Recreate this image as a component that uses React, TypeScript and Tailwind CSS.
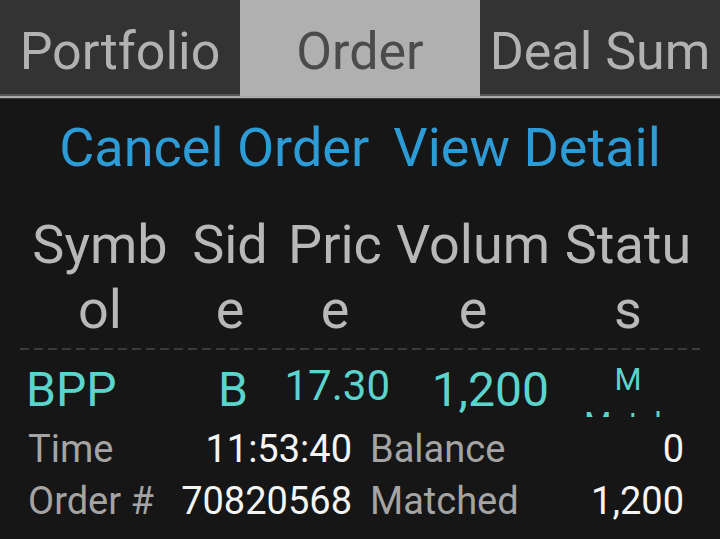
import React from 'react';

const TABS = ['Portfolio', 'Order', 'Deal Sum'];

const App: React.FC = () => {
  const active = 1;

  return (
    <div className="w-[720px] h-[539px] overflow-hidden bg-[#161616] [font-family:Roboto,sans-serif]">
      {/* Tab bar */}
      <div className="flex">
        {TABS.map((tab, i) => (
          <div
            key={tab}
            className={`flex-1 h-[96px] overflow-hidden whitespace-nowrap text-center text-[52px] leading-[61px] pt-[21px] ${
              i === active
                ? 'bg-[#b0b0b0] text-[#4b4b4b]'
                : 'bg-[#333333] text-[#b2b2b2] border-b-2 border-[#575757]'
            }`}
          >
            {tab}
          </div>
        ))}
      </div>
      <div className="h-[2px] bg-[#a9a9a9]" />
      <div className="h-px bg-[#3c3c3c]" />

      {/* Actions */}
      <div className="flex justify-center gap-[24px] pt-[17px] text-[54px] leading-[64px] text-[#2d9bd6]">
        <span>Cancel Order</span>
        <span>View Detail</span>
      </div>

      {/* Column headers */}
      <div className="flex pl-[20px] mt-[32px] text-[54px] leading-[65px] text-[#b8b8b8] text-center whitespace-nowrap">
        <div className="w-[160px]">Symb<br />ol</div>
        <div className="w-[100px]">Sid<br />e</div>
        <div className="w-[110px]">Pric<br />e</div>
        <div className="w-[166px]">Volum<br />e</div>
        <div className="w-[144px]">Statu<br />s</div>
      </div>

      <div className="mx-[20px] mt-[6px] h-[2px] bg-[repeating-linear-gradient(to_right,#3a3a3a_0_9px,transparent_9px_14px)]" />

      {/* Order row */}
      <div className="flex items-start h-[60px] pl-[20px] mt-[12px] text-[#5cd4ce] whitespace-nowrap">
        <div className="w-[160px] pl-[6px] text-[48px] leading-[56px]">BPP</div>
        <div className="w-[100px] pr-[32px] text-right text-[48px] leading-[56px]">B</div>
        <div className="w-[110px] text-right text-[42px] leading-[49px] -mt-[1px]">17.30</div>
        <div className="w-[166px] pr-[7px] text-right text-[48px] leading-[56px]">1,200</div>
        <div className="w-[144px] h-[59px] overflow-hidden text-center text-[31px] leading-[44px] -mt-[4px]">
          M<br />Match
        </div>
      </div>

      {/* Details */}
      <div className="px-[28px] mt-[1px] text-[38px] leading-[52px]">
        <div className="flex">
          <div className="w-[324px] flex justify-between">
            <span className="text-[#a4a4a4]">Time</span>
            <span className="text-[#f4f4f4]">11:53:40</span>
          </div>
          <div className="w-[314px] ml-[18px] flex justify-between">
            <span className="text-[#a4a4a4]">Balance</span>
            <span className="text-[#f4f4f4]">0</span>
          </div>
        </div>
        <div className="flex">
          <div className="w-[324px] flex justify-between">
            <span className="text-[#a4a4a4]">Order #</span>
            <span className="text-[#f4f4f4]">70820568</span>
          </div>
          <div className="w-[314px] ml-[18px] flex justify-between">
            <span className="text-[#a4a4a4]">Matched</span>
            <span className="text-[#f4f4f4]">1,200</span>
          </div>
        </div>
      </div>
    </div>
  );
};

export default App;
